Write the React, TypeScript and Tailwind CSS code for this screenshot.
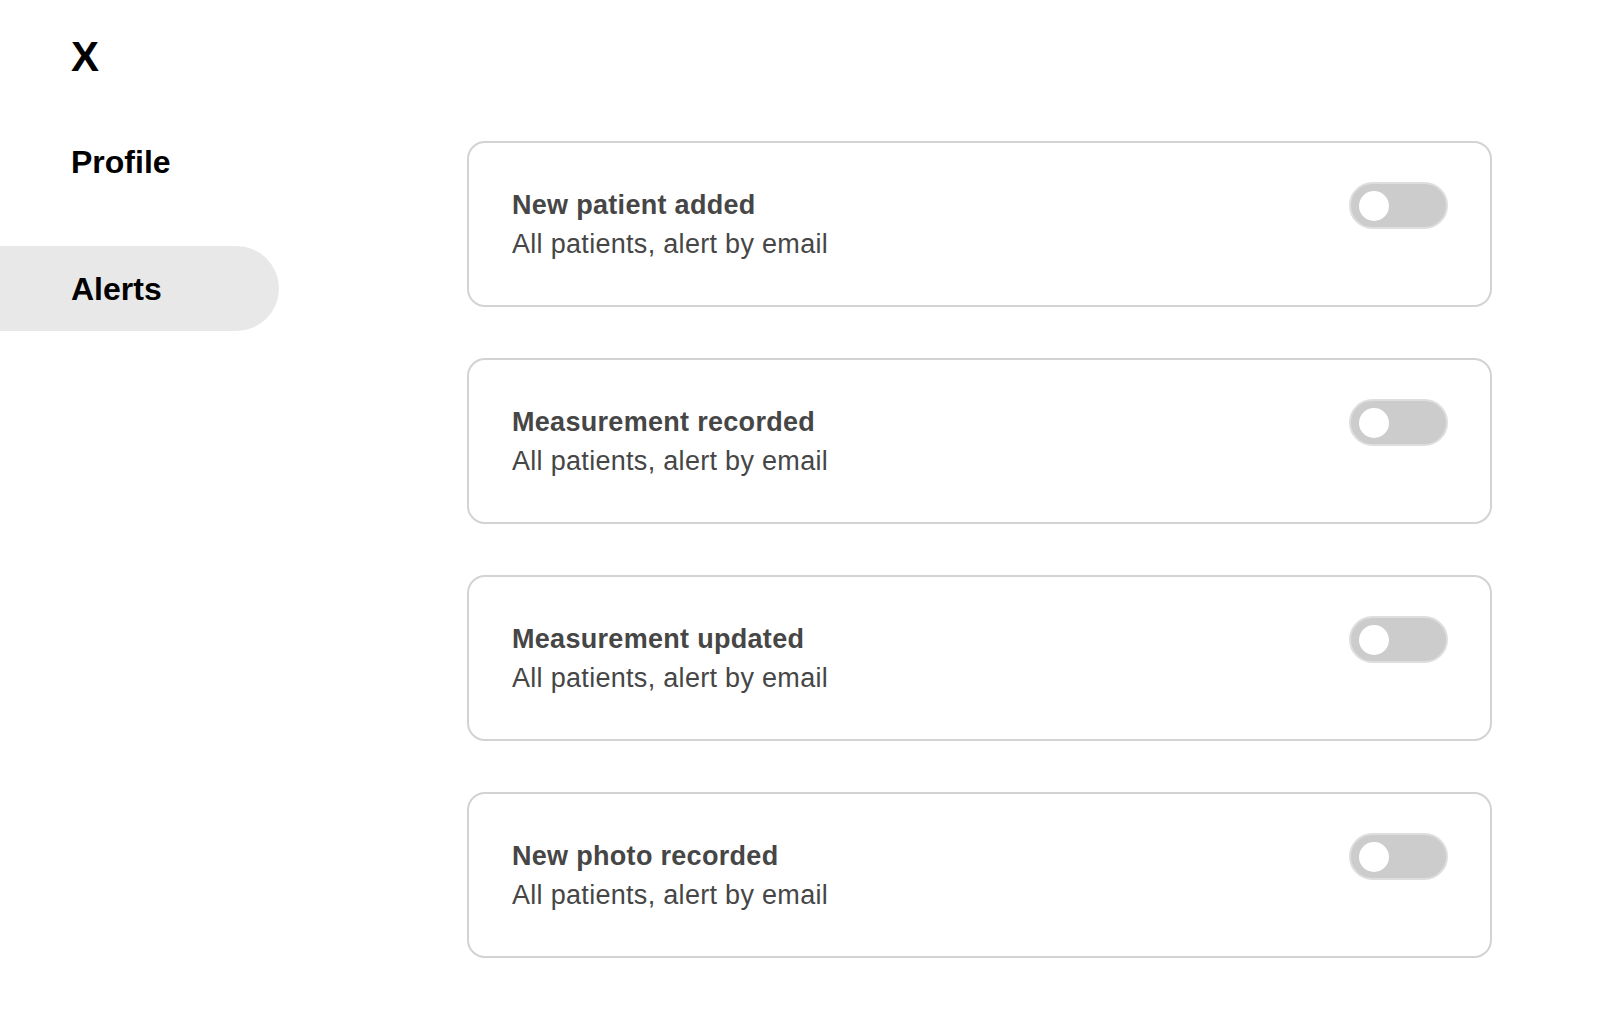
import { useState } from 'react';

const ALERTS = [
  { id: 'patient', title: 'New patient added' },
  { id: 'measure', title: 'Measurement recorded' },
  { id: 'update', title: 'Measurement updated' },
  { id: 'photo', title: 'New photo recorded' },
];

function Toggle({ on, onClick }: { on: boolean; onClick: () => void }) {
  return (
    <button
      onClick={onClick}
      className={`w-[99px] h-[47px] shrink-0 rounded-full border-2 border-[#dedede] flex items-center px-[8px] ${on ? 'bg-[#4a4a4a] justify-end' : 'bg-[#cccccc] justify-start'}`}
    >
      <span className="block w-[30px] h-[30px] rounded-full bg-white" />
    </button>
  );
}

function App() {
  const [enabled, setEnabled] = useState<Record<string, boolean>>({});
  const [tab, setTab] = useState('alerts');

  return (
    <div className="flex min-h-screen bg-white font-['Liberation_Sans',Arial,sans-serif]">
      <div className="w-[279px] shrink-0">
        <div className="pl-[71px] pt-[36px] text-[42px] leading-[42px] font-bold text-black">X</div>
        <nav className="mt-[41px] flex flex-col gap-[42px]">
          <div
            onClick={() => setTab('profile')}
            className={`h-[85px] flex items-center pl-[71px] text-[32px] font-bold text-black cursor-pointer rounded-r-full ${tab == 'profile' ? 'bg-[#e8e8e8]' : ''}`}
          >
            Profile
          </div>
          <div
            onClick={() => setTab('alerts')}
            className={`h-[85px] flex items-center pl-[71px] text-[32px] font-bold text-black cursor-pointer rounded-r-full ${tab == 'alerts' ? 'bg-[#e8e8e8]' : ''}`}
          >
            Alerts
          </div>
        </nav>
      </div>

      <main className="ml-[188px] pt-[141px] pb-[50px] flex flex-col gap-[51px]">
        {ALERTS.map((a) => (
          <div
            key={a.id}
            className="w-[1025px] border-2 border-[#d3d3d3] rounded-[18px] pl-[43px] pr-[42px] pt-[39px] pb-[41px] flex justify-between items-start"
          >
            <div className="mt-[4px] text-[#464646] text-[27px] leading-[39px] tracking-[0.3px]">
              <div className="font-bold">{a.title}</div>
              <div>All patients, alert by email</div>
            </div>
            <Toggle
              on={!!enabled[a.id]}
              onClick={() => setEnabled({ ...enabled, [a.id]: !enabled[a.id] })}
            />
          </div>
        ))}
      </main>
    </div>
  );
}

export default App;
